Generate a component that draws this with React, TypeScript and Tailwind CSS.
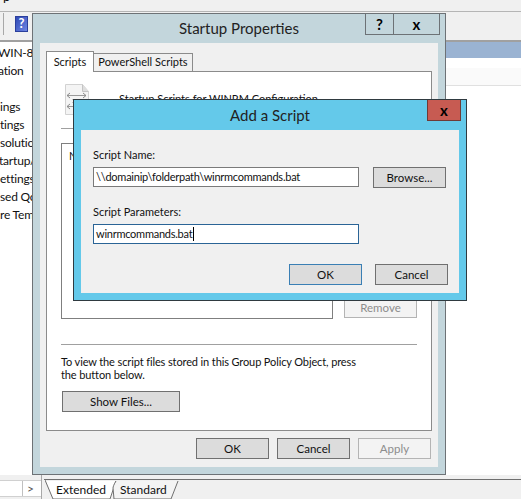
const treeRows = [
  { text: "WIN-8", className: "-ml-[2px]" },
  { text: "ation", className: "-ml-[2px]" },
  { text: "", className: "" },
  { text: "ings", className: "" },
  { text: "tings", className: "" },
  { text: "solution", className: "" },
  { text: "tartup/", className: "-ml-px" },
  { text: "ettings", className: "" },
  { text: "sed Qo", className: "" },
  { text: "re Tem", className: "" },
];

function WinButton({
  label,
  className,
  disabled,
  focused,
}: {
  label: string;
  className: string;
  disabled?: boolean;
  focused?: boolean;
}) {
  const look = disabled
    ? "border-[#b4b4b4] bg-[#f3f3f3] text-[#8d8d8d]"
    : focused
      ? "border-[#3a7fb4] bg-[#dcdcdc] text-[#111]"
      : "border-[#707070] bg-[#dcdcdc] text-[#111]";
  return (
    <div className={`flex h-[21px] shrink-0 items-center justify-center border text-[11.5px] ${look} ${className}`}>
      {label}
    </div>
  );
}

function ScriptIcon() {
  return (
    <svg width="26" height="32" viewBox="0 0 26 32" className="ml-[3px] shrink-0">
      <path d="M1.5 .5h17l6 7v23h-23z" fill="#f4f4f4" stroke="#d2d2d2" />
      <path d="M18.5 .5v7h6" fill="#dedede" stroke="#c4c4c4" />
      <path d="M3 11.5h19M3 22.5h19" stroke="#9a9a9a" fill="none" />
      <path d="M6 9l-3 2.5 3 2.5M19 9l3 2.5-3 2.5M6 20l-3 2.5 3 2.5" stroke="#8a8a8a" fill="none" />
      <path d="M8 15.5h9M8 18.5h9" stroke="#c8c8c8" fill="none" />
    </svg>
  );
}

function SheetTabs() {
  return (
    <div className="relative ml-[3px] h-full w-[140px]">
      <svg width="140" height="20" viewBox="0 0 140 20" className="absolute left-0 top-0">
        <path d="M71 1l-6 18H8L1 1z" fill="#ffffff" />
        <path d="M0 0l8 19h57l6-18" fill="none" stroke="#6f6f6f" />
        <path d="M71 1c-2 3-3 6-3 7l1 11h57l7-18" fill="#f4f4f4" stroke="#6f6f6f" />
      </svg>
      <div className="absolute left-[11px] top-[1px] text-[12px] leading-[18px]">Extended</div>
      <div className="absolute left-[75px] top-[1px] text-[12px] leading-[18px]">Standard</div>
    </div>
  );
}

export default function App() {
  return (
    <div className="relative h-[499px] w-[521px] overflow-hidden bg-white font-['Lato',sans-serif] text-[11px] text-[#111]">
      {/* console behind the dialogs */}
      <div className="flex h-full flex-col">
        <div className="h-[12px] overflow-hidden border-b border-[#b5b5b5] bg-[#f0f0f0] pl-[3px]">
          <div className="-mt-[13px] text-[13px]">p</div>
        </div>
        <div className="flex h-[30px] items-start border-b-2 border-[#a0a0a0] bg-[#f0f0f0] pl-[3px] pt-px">
          <div className="h-[22px] w-px bg-[#a8a8a8]" />
          <div className="ml-[11px] mt-[3px] flex h-[16px] w-[13px] items-center justify-center border border-[#2b3f9c] bg-gradient-to-br from-[#2f48b4] to-[#6f86e4] text-[13px] font-bold text-white">
            ?
          </div>
        </div>
        <div className="flex min-h-0 flex-1">
          <div className="w-[32px] overflow-hidden pt-[2px] text-[12px] tracking-[-0.2px]">
            {treeRows.map((row, i) => (
              <div key={i} className={`flex h-[18px] items-center whitespace-nowrap ${row.className}`}>
                {row.text}
              </div>
            ))}
          </div>
          <div className="ml-auto w-[75px]">
            <div className="h-[16px] bg-[#9ab3d2]" />
            <div className="h-[10px] bg-white" />
            <div className="h-[18px] border-b border-[#e0e0e0] bg-[#fafafa]" />
          </div>
        </div>
        <div className="flex h-[24px] bg-[#f0f0f0]">
          <div className="h-full w-[42px] border-r border-[#a8a8a8] bg-[#f0f0f0]">
            <div className="mt-[5px] flex h-[17px] border-y border-[#d0d0d0] bg-white pr-[3px]">
              <div className="ml-auto flex w-[16px] items-center justify-center border-l border-[#c0c0c0] text-[12px] text-[#555]">
                &gt;
              </div>
            </div>
          </div>
          <div className="min-w-0 flex-1 pt-[5px]">
            <SheetTabs />
          </div>
        </div>
      </div>
      <div className="pointer-events-none absolute bottom-[19px] left-[44px] right-0 h-px bg-[#6f6f6f]" />

      {/* Startup Properties window */}
      <div className="absolute left-[32px] top-[13px] flex h-[462px] w-[414px] flex-col border border-[#6d7276] bg-[#c3d6dc] px-[7px] pb-[7px]">
        <div className="relative flex h-[29px] shrink-0 items-center justify-center text-[15px] text-[#222]">
          Startup Properties
          <div className="absolute -right-[2px] top-0 flex h-[21px] text-[15px] font-bold text-black">
            <div className="flex w-[29px] items-center justify-center border border-t-0 border-[#6d7276]">?</div>
            <div className="flex w-[46px] items-center justify-center border border-l-0 border-t-0 border-[#6d7276]">x</div>
          </div>
        </div>
        <div className="flex min-h-0 flex-1 flex-col bg-[#f0f0f0] px-[6px] pt-[8px]">
          <div className="flex items-end">
            <div className="relative z-10 -mb-px flex h-[21px] w-[48px] items-center justify-center border border-b-0 border-[#8b8b8b] bg-white">
              Scripts
            </div>
            <div className="flex h-[18px] w-[99px] items-center justify-center whitespace-nowrap border border-b-0 border-l-0 border-[#8b8b8b] bg-[#f0f0f0]">
              PowerShell Scripts
            </div>
          </div>
          <div className="flex h-[360px] shrink-0 flex-col border border-[#8b8b8b] bg-white px-[14px]">
            <div className="flex h-[56px] shrink-0 items-start gap-[29px] pt-[12px]">
              <ScriptIcon />
              <div className="mt-[7px] whitespace-nowrap">Startup Scripts for WINRM Configuration</div>
            </div>
            <div className="h-px bg-[#a0a0a0]" />
            <div className="mt-[14px] h-[176px] w-[272px] border border-[#7f7f7f] pl-[7px] pt-[4px]">N</div>
            <div className="-mt-[22px] flex justify-end">
              <WinButton label="Remove" disabled className="w-[73px]" />
            </div>
            <div className="mt-[26px] h-px bg-[#a0a0a0]" />
            <div className="mt-[10px] whitespace-nowrap leading-[13px] tracking-[-0.12px]">
              To view the script files stored in this Group Policy Object, press
              <br />
              the button below.
            </div>
            <WinButton label="Show Files..." className="ml-[1px] mt-[10px] w-[118px]" />
          </div>
          <div className="mt-[7px] flex justify-end gap-[8px] pr-[1px]">
            <WinButton label="OK" className="w-[73px]" />
            <WinButton label="Cancel" className="w-[73px]" />
            <WinButton label="Apply" disabled className="w-[73px]" />
          </div>
        </div>
      </div>

      {/* Add a Script window */}
      <div className="absolute left-[73px] top-[99px] flex h-[202px] w-[394px] flex-col border border-[#2f3a40] bg-[#64c9ea] px-[7px] pb-[7px]">
        <div className="relative flex h-[30px] shrink-0 items-center justify-center text-[15px] text-[#222]">
          Add a Script
          <div className="absolute -right-[2px] top-0 flex h-[21px] w-[34px] items-center justify-center border border-t-0 border-[#6f3a36] bg-[#c75b52] text-[15px] font-bold text-black">
            x
          </div>
        </div>
        <div className="flex min-h-0 flex-1 flex-col bg-[#f0f0f0] px-[12px] pt-[16px]">
          <div className="h-[18px] leading-[18px]">Script Name:</div>
          <div className="mt-[3px] flex h-[21px] items-start gap-[14px]">
            <div className="flex h-[20px] w-[266px] items-center border border-[#7a7a7a] bg-white pl-[2px] tracking-[-0.25px]">
              \\domainip\folderpath\winrmcommands.bat
            </div>
            <WinButton label="Browse..." className="w-[73px]" />
          </div>
          <div className="mt-[15px] h-[18px] leading-[18px]">Script Parameters:</div>
          <div className="mt-[3px] flex h-[20px] w-[266px] shrink-0 items-center border border-[#2a6496] bg-white pl-[2px] tracking-[-0.25px]">
            winrmcommands.bat
            <span className="ml-[1px] h-[14px] w-px bg-black" />
          </div>
          <div className="-mr-[1px] mt-[20px] flex justify-end gap-[13px]">
            <WinButton label="OK" focused className="w-[73px]" />
            <WinButton label="Cancel" className="w-[73px]" />
          </div>
        </div>
      </div>
    </div>
  );
}
